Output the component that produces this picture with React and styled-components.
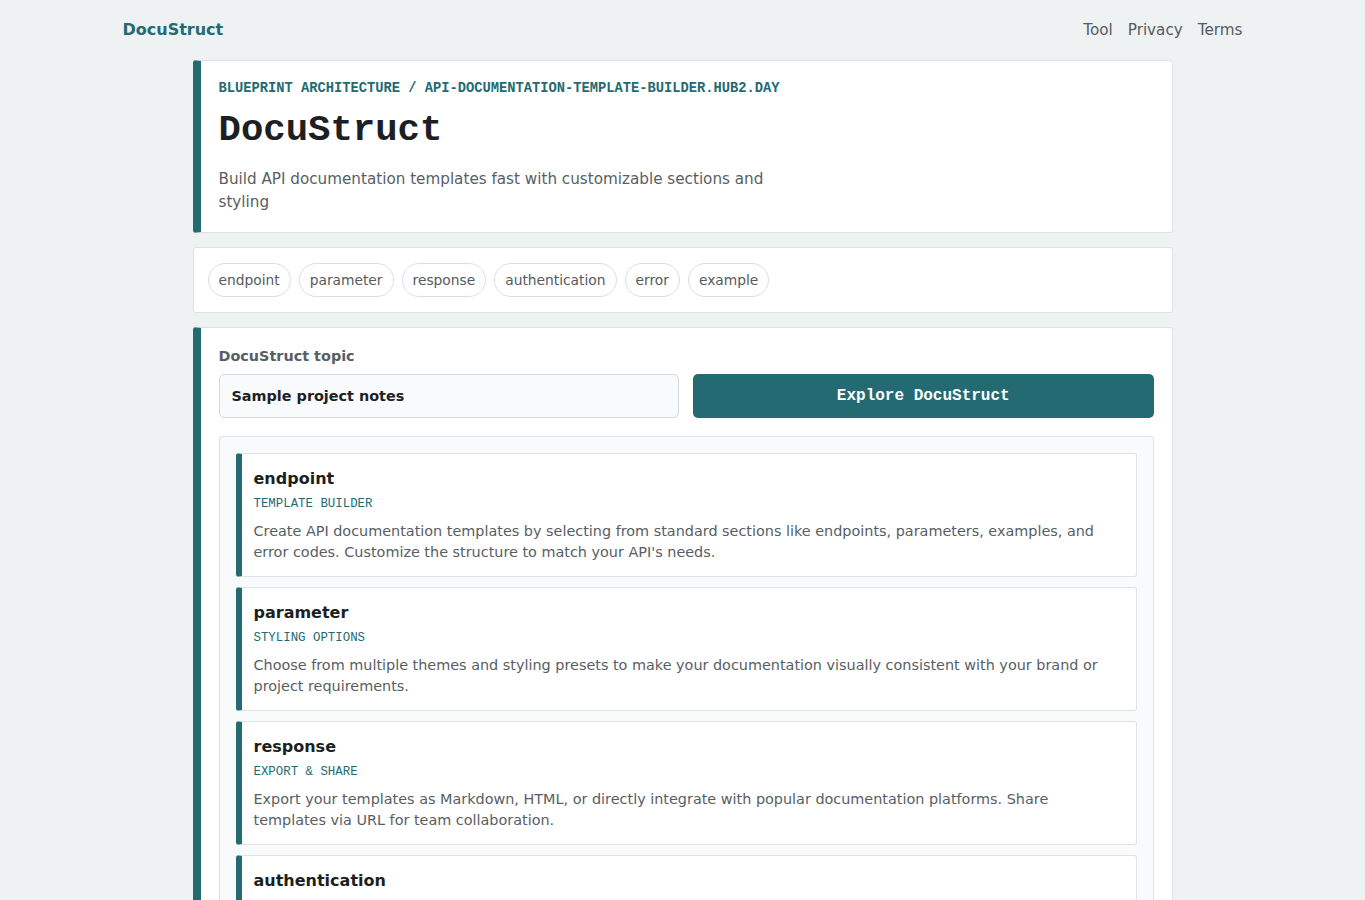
import React, { useState } from "react";
import styled, { createGlobalStyle } from "styled-components";

const teal = "#246a72";
const mono = '"Liberation Mono", "DejaVu Sans Mono", monospace';

const GlobalStyle = createGlobalStyle`
  html, body {
    margin: 0;
    padding: 0;
    background: #eef2f3;
    font-family: "DejaVu Sans", "Noto Sans", sans-serif;
    color: #1d2125;
  }
  * { box-sizing: border-box; }
`;

const tags = ["endpoint", "parameter", "response", "authentication", "error", "example"];

const sections = [
  {
    title: "endpoint",
    label: "TEMPLATE BUILDER",
    text: "Create API documentation templates by selecting from standard sections like endpoints, parameters, examples, and error codes. Customize the structure to match your API's needs."
  },
  {
    title: "parameter",
    label: "STYLING OPTIONS",
    text: "Choose from multiple themes and styling presets to make your documentation visually consistent with your brand or project requirements."
  },
  {
    title: "response",
    label: "EXPORT & SHARE",
    text: "Export your templates as Markdown, HTML, or directly integrate with popular documentation platforms. Share templates via URL for team collaboration."
  },
  {
    title: "authentication",
    label: "ACCESS CONTROL",
    text: "Document API keys, OAuth flows and token scopes in a dedicated section so readers know how to authenticate before their first request."
  },
  {
    title: "error",
    label: "ERROR CODES",
    text: "List status codes, error payloads and recovery hints in a consistent table that stays in sync with the rest of your template."
  },
  {
    title: "example",
    label: "CODE SAMPLES",
    text: "Add request and response examples in several languages so developers can copy working snippets straight from the docs."
  }
];

export default function App() {
  const [topic, setTopic] = useState("Sample project notes");

  return (
    <>
      <GlobalStyle />
      <Nav>
        <Brand>DocuStruct</Brand>
        <NavLinks>
          <NavLink href="#">Tool</NavLink>
          <NavLink href="#">Privacy</NavLink>
          <NavLink href="#">Terms</NavLink>
        </NavLinks>
      </Nav>
      <Main>
        <Card accent>
          <Eyebrow>BLUEPRINT ARCHITECTURE / API-DOCUMENTATION-TEMPLATE-BUILDER.HUB2.DAY</Eyebrow>
          <Title>DocuStruct</Title>
          <Lead>Build API documentation templates fast with customizable sections and styling</Lead>
        </Card>

        <TagCard>
          {tags.map(t => <Chip key={t}>{t}</Chip>)}
        </TagCard>

        <Card accent>
          <FieldLabel>DocuStruct topic</FieldLabel>
          <FormRow>
            <TopicInput value={topic} onChange={e => setTopic(e.target.value)} />
            <ExploreButton>Explore DocuStruct</ExploreButton>
          </FormRow>
          <SectionList>
            {sections.map(s => (
              <Section key={s.title}>
                <SectionTitle>{s.title}</SectionTitle>
                <SectionLabel>{s.label}</SectionLabel>
                <SectionText>{s.text}</SectionText>
              </Section>
            ))}
          </SectionList>
        </Card>
      </Main>
    </>
  );
}

const Nav = styled.header`
  max-width: 1120px;
  margin: 0 auto;
  padding: 19px 0 19px;
  display: flex;
  align-items: center;
  justify-content: space-between;
`;

const Brand = styled.div`
  font-size: 16px;
  font-weight: bold;
  color: ${teal};
  line-height: 22px;
`;

const NavLinks = styled.nav`
  display: flex;
  gap: 15px;
`;

const NavLink = styled.a`
  color: #555b60;
  text-decoration: none;
  font-size: 15.2px;
  line-height: 22px;
`;

const Main = styled.main`
  max-width: 980px;
  margin: 0 auto;
  display: flex;
  flex-direction: column;
  gap: 14px;
`;

const Card = styled.section`
  background: #fff;
  border: 1px solid #dde2e5;
  border-left: ${p => (p.accent ? `8px solid ${teal}` : "1px solid #dde2e5")};
  border-radius: 3px;
  padding: ${p => (p.accent ? "19px 18px 18px" : "18px")};
`;

const Eyebrow = styled.div`
  font-family: ${mono};
  font-size: 13.75px;
  font-weight: bold;
  color: ${teal};
  line-height: 18px;
`;

const Title = styled.h1`
  font-family: ${mono};
  font-size: 37.3px;
  font-weight: bold;
  line-height: 44px;
  margin: 10px 0 0;
  color: #1c2024;
`;

const Lead = styled.p`
  margin: 16px 0 0;
  max-width: 570px;
  font-size: 15.2px;
  line-height: 23px;
  color: #585e63;
`;

const TagCard = styled.section`
  background: #fff;
  border: 1px solid #dde2e5;
  border-radius: 3px;
  padding: 15px 14px;
  display: flex;
  flex-wrap: wrap;
  gap: 8px;
`;

const Chip = styled.span`
  display: inline-flex;
  align-items: center;
  height: 34px;
  padding: 0 10px;
  border: 1px solid #dcdfe2;
  border-radius: 999px;
  font-size: 13.8px;
  color: #555b60;
`;

const FieldLabel = styled.label`
  display: block;
  font-size: 14.4px;
  font-weight: bold;
  color: #585e63;
  line-height: 20px;
  margin-top: -1px;
  margin-bottom: 8px;
`;

const FormRow = styled.div`
  display: grid;
  grid-template-columns: 1fr 1fr;
  gap: 14px;
`;

const TopicInput = styled.input`
  height: 44px;
  padding: 0 12px;
  border: 1px solid #d3d8dc;
  border-radius: 5px;
  background: #f8fafb;
  font-family: "DejaVu Sans", sans-serif;
  font-size: 14.4px;
  font-weight: bold;
  color: #1d2125;
  outline: none;
`;

const ExploreButton = styled.button`
  height: 44px;
  border: none;
  border-radius: 5px;
  background: ${teal};
  color: #fff;
  font-family: ${mono};
  font-size: 16px;
  font-weight: bold;
  cursor: pointer;
`;

const SectionList = styled.div`
  margin-top: 18px;
  background: #f8fafb;
  border: 1px solid #dde2e5;
  border-radius: 3px;
  padding: 16px;
  display: flex;
  flex-direction: column;
  gap: 10px;
`;

const Section = styled.article`
  background: #fff;
  border: 1px solid #dde2e5;
  border-left: 6px solid ${teal};
  border-radius: 3px;
  padding: 14px 18px 13px 12px;
`;

const SectionTitle = styled.h3`
  margin: 0;
  font-size: 16px;
  font-weight: bold;
  line-height: 22px;
  color: #1c1f22;
`;

const SectionLabel = styled.div`
  margin-top: 6px;
  font-family: ${mono};
  font-size: 12.4px;
  line-height: 17px;
  color: ${teal};
`;

const SectionText = styled.p`
  margin: 8px 0 0;
  font-size: 14.4px;
  line-height: 21px;
  color: #585e63;
`;
